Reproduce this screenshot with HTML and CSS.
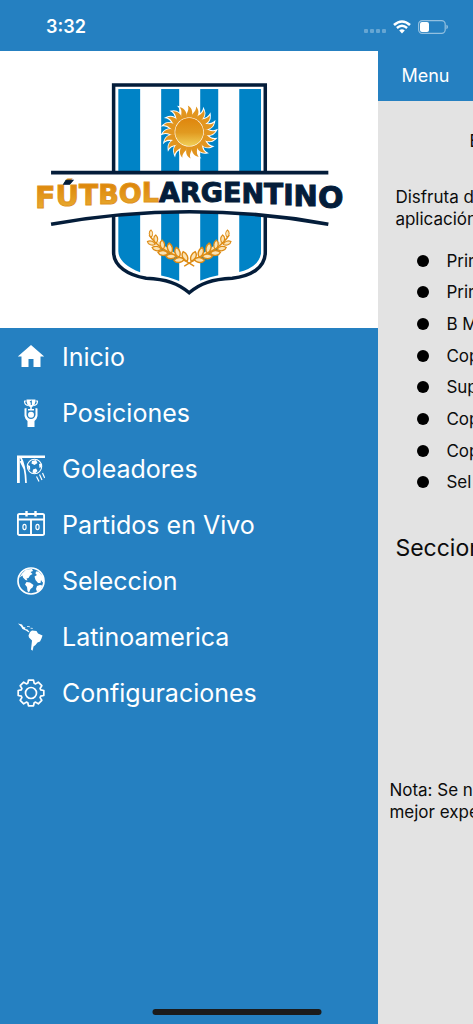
FILE: index.html
```html
<!DOCTYPE html>
<html lang="es">
<head>
  <meta charset="UTF-8">
  <meta name="viewport" content="width=device-width, initial-scale=1.0">
  <title>Fútbol Argentino</title>
  <link rel="stylesheet" href="styles.css">
</head>
<body>
  <header class="status-bar">
    <span class="time">3:32</span>
    <div class="status-icons">
      <svg class="signal" width="22" height="4" viewBox="0 0 22 4">
        <rect x="0" y="0" width="4" height="4" rx="1"/>
        <rect x="6" y="0" width="4" height="4" rx="1"/>
        <rect x="12" y="0" width="4" height="4" rx="1"/>
        <rect x="18" y="0" width="4" height="4" rx="1"/>
      </svg>
      <svg class="wifi" width="18" height="14" viewBox="0 0 18 14">
        <path d="M1 5 Q9 -2 17 5" stroke-width="2.6"/>
        <path d="M3.9 8 Q9 3.6 14.1 8" stroke-width="2.4"/>
        <path class="dot" d="M6.2 10.4 Q9 8.2 11.8 10.4 L9 13.4 Z"/>
      </svg>
      <svg class="battery" width="30" height="14" viewBox="0 0 30 14">
        <rect class="shell" x="0.6" y="0.6" width="26.6" height="12.8" rx="3.6"/>
        <path class="cap" d="M28.4 4.8 Q30 5.4 30 7 Q30 8.6 28.4 9.2 Z"/>
        <rect class="level" x="2" y="2" width="9" height="10" rx="2"/>
      </svg>
    </div>
  </header>

  <div class="app">
    <aside class="drawer">
      <div class="logo">
        <svg viewBox="0 51 378 277" role="img" aria-label="Fútbol Argentino">
          <defs>
            <linearGradient id="gold" gradientUnits="userSpaceOnUse" x1="0" y1="184" x2="0" y2="208">
              <stop offset="0" stop-color="#dd860a"/>
              <stop offset="1" stop-color="#e8ab31"/>
            </linearGradient>
            <linearGradient id="sunFill" gradientUnits="userSpaceOnUse" x1="0" y1="118" x2="0" y2="147">
              <stop offset="0" stop-color="#df850c"/>
              <stop offset="0.5" stop-color="#e19a20"/>
              <stop offset="1" stop-color="#f3d45c"/>
            </linearGradient>
            <clipPath id="shieldInner">
              <path d="M118 89 H261 V251 Q260 267 238 272 Q206 275 189 286 Q172 275 140 272 Q119 264 118 251 Z"/>
            </clipPath>
            <path id="ray" d="M186.500 117.500 C184.600 114 189.900 111 187.600 105.500 C193 108.500 192.300 113.500 191.500 117.500 Z"/>
            <g id="rays">
              <use href="#ray"/>
              <use href="#ray" transform="rotate(18 189 132)"/>
              <use href="#ray" transform="rotate(36 189 132)"/>
              <use href="#ray" transform="rotate(54 189 132)"/>
              <use href="#ray" transform="rotate(72 189 132)"/>
            </g>
            <g id="allRays">
              <use href="#rays"/>
              <use href="#rays" transform="rotate(90 189 132)"/>
              <use href="#rays" transform="rotate(180 189 132)"/>
              <use href="#rays" transform="rotate(270 189 132)"/>
            </g>
            <path id="leaf" d="M0 0 C-1 -4 -5 -6 -9 -5 C-9 -1 -4 2 0 0 Z"/>
            <g id="branch">
              <path d="M194 266 C182 257 160 252 149 235"/>
              <use href="#leaf" transform="translate(187 261) rotate(38)"/>
              <use href="#leaf" transform="translate(184 259) rotate(-35)"/>
              <use href="#leaf" transform="translate(179 257) rotate(45)"/>
              <use href="#leaf" transform="translate(176 256) rotate(-28)"/>
              <use href="#leaf" transform="translate(171 253) rotate(50)"/>
              <use href="#leaf" transform="translate(168 253) rotate(-24)"/>
              <use href="#leaf" transform="translate(163 249) rotate(54) scale(0.9)"/>
              <use href="#leaf" transform="translate(161 249) rotate(-18) scale(0.9)"/>
              <use href="#leaf" transform="translate(156 243) rotate(58) scale(0.8)"/>
              <use href="#leaf" transform="translate(155 244) rotate(-10) scale(0.8)"/>
              <use href="#leaf" transform="translate(151 237) rotate(60) scale(0.7)"/>
            </g>
          </defs>

          <path class="shield" d="M113.500 85 H265 V252 C265 268 250 276 232 278 C212 279 200 283 189 292.500 C178 283 166 279 146 278 C128 275 113.500 266 113.500 252 Z"/>
          <g class="stripes" clip-path="url(#shieldInner)">
            <rect x="118" y="89" width="22" height="200"/>
            <rect x="161" y="89" width="18" height="200"/>
            <rect x="200" y="89" width="18" height="200"/>
            <rect x="239" y="89" width="22" height="200"/>
          </g>

          <g class="sun-edge">
            <use href="#allRays"/>
            <circle cx="189" cy="132" r="15"/>
          </g>
          <g fill="#e2951f">
            <use href="#allRays"/>
          </g>
          <circle cx="189" cy="132" r="14" fill="url(#sunFill)"/>

          <path class="ribbon" d="M51 172 H328 V224 Q189 199 51 224 Z"/>
          <path class="ribbon-line" d="M51 172.500 H328"/>
          <path class="ribbon-line" d="M51 224 Q189 199 328 224"/>

          <g class="laurel">
            <use href="#branch"/>
            <use href="#branch" transform="translate(378 0) scale(-1 1)"/>
          </g>

          <text class="wordmark" x="35" y="208"><tspan class="gold"><tspan font-size="30">F</tspan><tspan font-size="29" y="206">Ú</tspan><tspan font-size="28" y="205">T</tspan><tspan y="204">B</tspan><tspan y="203">O</tspan><tspan y="202">L</tspan></tspan><tspan class="navy"><tspan y="202">A</tspan><tspan>R</tspan><tspan>G</tspan><tspan y="202">E</tspan><tspan y="203">N</tspan><tspan font-size="28" y="204">T</tspan><tspan font-size="28" y="205">I</tspan><tspan font-size="29" y="206">N</tspan><tspan font-size="30" y="208">O</tspan></tspan></text>
          <path class="navy" d="M66 180 H73 L69.500 184 H63.500 Z"/>
        </svg>
      </div>

      <nav class="menu">
        <a href="#inicio">
          <svg viewBox="0 0 28 28">
            <path d="M14 2 L0.800 13.500 H4.500 V24 H11.500 V16 H16.500 V24 H23.500 V13.500 H27.200 Z"/>
          </svg>
          Inicio
        </a>
        <a href="#posiciones">
          <svg viewBox="0 0 28 28">
            <path d="M9.500 0.500 H18.500 C18.500 5 17 7.500 14.800 8 V10 H17 V11.500 H11 V10 H13.200 V8 C11 7.500 9.500 5 9.500 0.500 Z"/>
            <path class="line" d="M9.500 2 H7.500 Q7.500 6 11 6.500 M18.500 2 H20.500 Q20.500 6 17 6.500" stroke-width="1.200"/>
            <path class="cut" d="M13 3 L14.300 2.200 V6" stroke-width="1.100"/>
            <circle cx="14" cy="15.800" r="3"/>
            <path d="M7.500 9.500 L9.500 9 V16 Q10.500 20 14 20 Q17.500 20 18.500 16 V9 L20.500 9.500 V17 Q20 20 17.500 22 V28 H10.500 V22 Q8 20 7.500 17 Z"/>
          </svg>
          Posiciones
        </a>
        <a href="#goleadores">
          <svg viewBox="0 0 28 28">
            <path d="M0 0.500 H28 V3 H2.800 V28 H0 Z"/>
            <path class="line" d="M3.500 2 C7 8 8.500 14 9 28 M3.500 6 C5 9 6.500 12 7.500 14" stroke-width="1.700"/>
            <circle class="line" cx="17.500" cy="11.500" r="7.200" stroke-width="1.100"/>
            <path d="M15 6 L19 5 L20.500 8 L17.500 10 L14.500 8.500 Z M10.800 10 L13 11 L13.200 14.500 L11.500 15 Z M16 14.500 L19 13.500 L20.500 16 L18 18.500 L15.500 17.500 Z M22 9 L24 8.500 L24.500 12 L22.500 13 Z"/>
            <path class="line" d="M19.500 21.500 L22 26.500 M22.500 19.500 L25 25 M25.500 18 L27.700 23" stroke-width="1.200"/>
          </svg>
          Goleadores
        </a>
        <a href="#partidos">
          <svg viewBox="0 0 28 28">
            <rect class="line" x="0.900" y="3" width="26.200" height="21" rx="1.500" stroke-width="1.900"/>
            <path class="line" d="M1 8.500 H27 M14 8.500 V24" stroke-width="1.900"/>
            <path class="line" d="M9.500 0 V5.500 M18.500 0 V5.500" stroke-width="2.400"/>
            <ellipse class="line" cx="7.500" cy="16" rx="1.600" ry="2.700" stroke-width="1.200"/>
            <ellipse class="line" cx="20.500" cy="16" rx="1.600" ry="2.700" stroke-width="1.200"/>
          </svg>
          Partidos en Vivo
        </a>
        <a href="#seleccion">
          <svg viewBox="0 0 28 28">
            <circle class="line" cx="14" cy="14" r="13" stroke-width="1.700"/>
            <path d="M5 6.500 L9 2.500 L15 2 L16 4 L13.500 5 L15.500 7 L13 8.500 L11.500 11 L9.500 11.500 L10.500 13.500 L8.500 13 L6 10.500 L5.500 8.500 L2.500 10.500 Z"/>
            <path d="M9.500 15 L13 15.500 L16.500 18 L15.500 20.500 L13.500 22 L12 25.500 L10.500 24 L10 20 L8 17.500 Z"/>
            <path d="M19 4.500 L21.500 4.500 L26 9.500 L27 14 L25.500 15.500 L24 13 L23.500 16 L21 16 L18.500 13 L17.500 9.500 L20 8 L18.500 6.500 Z"/>
            <path d="M20 19 L23 18 L25.500 18.500 L23.500 22.500 L20 24.500 L19 22 Z"/>
          </svg>
          Seleccion
        </a>
        <a href="#latinoamerica">
          <svg viewBox="0 0 28 28">
            <path d="M1 0.500 L5 1.500 L6.500 4 L8.500 4.500 L8 6 L10.500 6.500 L12.500 9 L11.500 9.300 L9 7.500 L5.500 6 L4 3.500 Z"/>
            <path d="M10 3 L13 3.500 L12.800 4.200 L10 3.700 Z M13.500 4.700 L16 5 L15.500 5.800 L13.500 5.500 Z"/>
            <path d="M13 9 L15 7.500 L19.500 8 L21 10.500 L25.500 12.500 L24.500 15.500 L23 18.500 L20.500 19.500 L18.500 22 L16.500 23.500 L16 26 L15.500 27.700 L14 26.500 L14.500 22 L15 17.500 L12 14.500 L11.500 12.500 Z"/>
          </svg>
          Latinoamerica
        </a>
        <a href="#configuraciones">
          <svg viewBox="0 0 28 28">
            <path class="line" stroke-width="1.700" d="M11.500 1.200 L16.500 1.200 L17.200 4.300 L18.600 4.900 L21.300 3.200 L24.800 6.700 L23.100 9.400 L23.700 10.800 L26.800 11.500 L26.800 16.500 L23.700 17.200 L23.100 18.600 L24.800 21.300 L21.300 24.800 L18.600 23.100 L17.200 23.700 L16.500 26.800 L11.500 26.800 L10.800 23.700 L9.400 23.100 L6.700 24.800 L3.200 21.300 L4.900 18.600 L4.300 17.200 L1.200 16.500 L1.200 11.500 L4.300 10.800 L4.900 9.400 L3.200 6.700 L6.700 3.200 L9.400 4.900 L10.800 4.300 Z"/>
            <circle class="line" cx="14" cy="14" r="5.500" stroke-width="1.700"/>
          </svg>
          Configuraciones
        </a>
      </nav>
    </aside>

    <main class="page">
      <div class="toolbar">
        <button type="button">Menu</button>
      </div>
      <div class="content">
        <p class="title">E</p>
        <p class="intro">Disfruta d<br>aplicación</p>
        <ul>
          <li>Prim</li>
          <li>Prim</li>
          <li>B M</li>
          <li>Cop</li>
          <li>Sup</li>
          <li>Cop</li>
          <li>Cop</li>
          <li>Sel</li>
        </ul>
        <h2>Seccion</h2>
        <p class="note">Nota: Se n<br>mejor expe</p>
      </div>
    </main>
  </div>
  <div class="home-indicator"></div>
</body>
</html>
```

FILE: styles.css
```css
:root {
  --blue: #2580c1;
  --shield-blue: #0083c6;
  --navy: #041d3a;
  --page: #e3e3e3;
}
* {
  box-sizing: border-box;
  margin: 0;
  padding: 0;
}
body {
  display: flex;
  flex-direction: column;
  min-height: 100vh;
  font-family: Inter, "Liberation Sans", sans-serif;
  font-size: 17px;
  line-height: 22px;
  color: #0c0c0c;
  background-color: var(--blue);
}

/* Status bar */
.status-bar {
  display: flex;
  justify-content: space-between;
  align-items: center;
  height: 51px;
  padding: 2px 25px 0 46px;
  color: white;
}
.time {
  font-size: 18px;
  font-weight: 600;
}
.status-icons {
  display: flex;
  align-items: center;
  gap: 7px;
}
.signal {
  margin-top: 9px;
  fill: rgba(255, 255, 255, 0.3);
}
.wifi {
  fill: none;
  stroke: white;
}
.wifi .dot {
  fill: white;
  stroke: none;
}
.battery .shell {
  fill: none;
  stroke: rgba(255, 255, 255, 0.5);
  stroke-width: 1.2;
}
.battery .cap {
  fill: rgba(255, 255, 255, 0.5);
}
.battery .level {
  fill: white;
}

.app {
  display: flex;
  flex: 1;
}

/* Drawer */
.drawer {
  flex: 0 0 80%;
  background-color: var(--blue);
}
.logo {
  background-color: white;
}
.logo svg {
  display: block;
  width: 100%;
}
.shield {
  fill: white;
  stroke: var(--navy);
  stroke-width: 3.5;
}
.stripes {
  fill: var(--shield-blue);
}
.sun-edge {
  fill: white;
  stroke: white;
  stroke-width: 2;
}
.ribbon {
  fill: white;
}
.ribbon-line {
  fill: none;
  stroke: var(--navy);
  stroke-width: 3.5;
}
.laurel {
  fill: #fbe3b4;
  stroke: #dd8b14;
  stroke-width: 1.4;
}
.wordmark {
  font-family: "DejaVu Sans", sans-serif;
  font-weight: bold;
  font-size: 27px;
}
.gold {
  fill: url(#gold);
  stroke: #e0921a;
}
.navy {
  fill: var(--navy);
  stroke: var(--navy);
}
.menu {
  padding-top: 1px;
}
.menu a {
  display: flex;
  align-items: center;
  gap: 17px;
  height: 56px;
  padding-left: 17px;
  font-size: 25px;
  color: white;
  text-decoration: none;
}
.menu svg {
  width: 28px;
  height: 28px;
  fill: white;
}
.menu .line {
  fill: none;
  stroke: white;
  stroke-linejoin: round;
}
.menu .cut {
  fill: none;
  stroke: var(--blue);
}

/* Page behind the drawer */
.page {
  flex: 1;
  min-width: 0;
  overflow: hidden;
  background-color: var(--page);
  white-space: nowrap;
}
.toolbar {
  display: flex;
  align-items: center;
  height: 50px;
  padding-left: 23px;
  background-color: var(--blue);
}
.toolbar button {
  border: none;
  background: none;
  font: inherit;
  font-size: 18px;
  color: white;
}
.content {
  padding: 29px 0 29px 17px;
}
.title {
  padding-left: 74px;
}
.intro {
  margin-top: 34px;
}
ul {
  display: grid;
  grid-auto-rows: 1fr;
  height: 253px;
  margin-top: 15px;
  list-style: none;
}
li {
  display: flex;
  align-items: center;
  gap: 17px;
  padding-left: 22px;
}
li::before {
  content: "";
  flex: none;
  width: 12px;
  height: 12px;
  border-radius: 50%;
  background-color: black;
}
h2 {
  margin-top: 34px;
  font-size: 23px;
  font-weight: normal;
  line-height: 32px;
}
.note {
  margin: 215px 0 0 -6px;
}
.home-indicator {
  position: fixed;
  left: 50%;
  bottom: 9px;
  width: 169px;
  height: 6px;
  border-radius: 3px;
  background-color: #1b1b1b;
  transform: translateX(-50%);
}
```
